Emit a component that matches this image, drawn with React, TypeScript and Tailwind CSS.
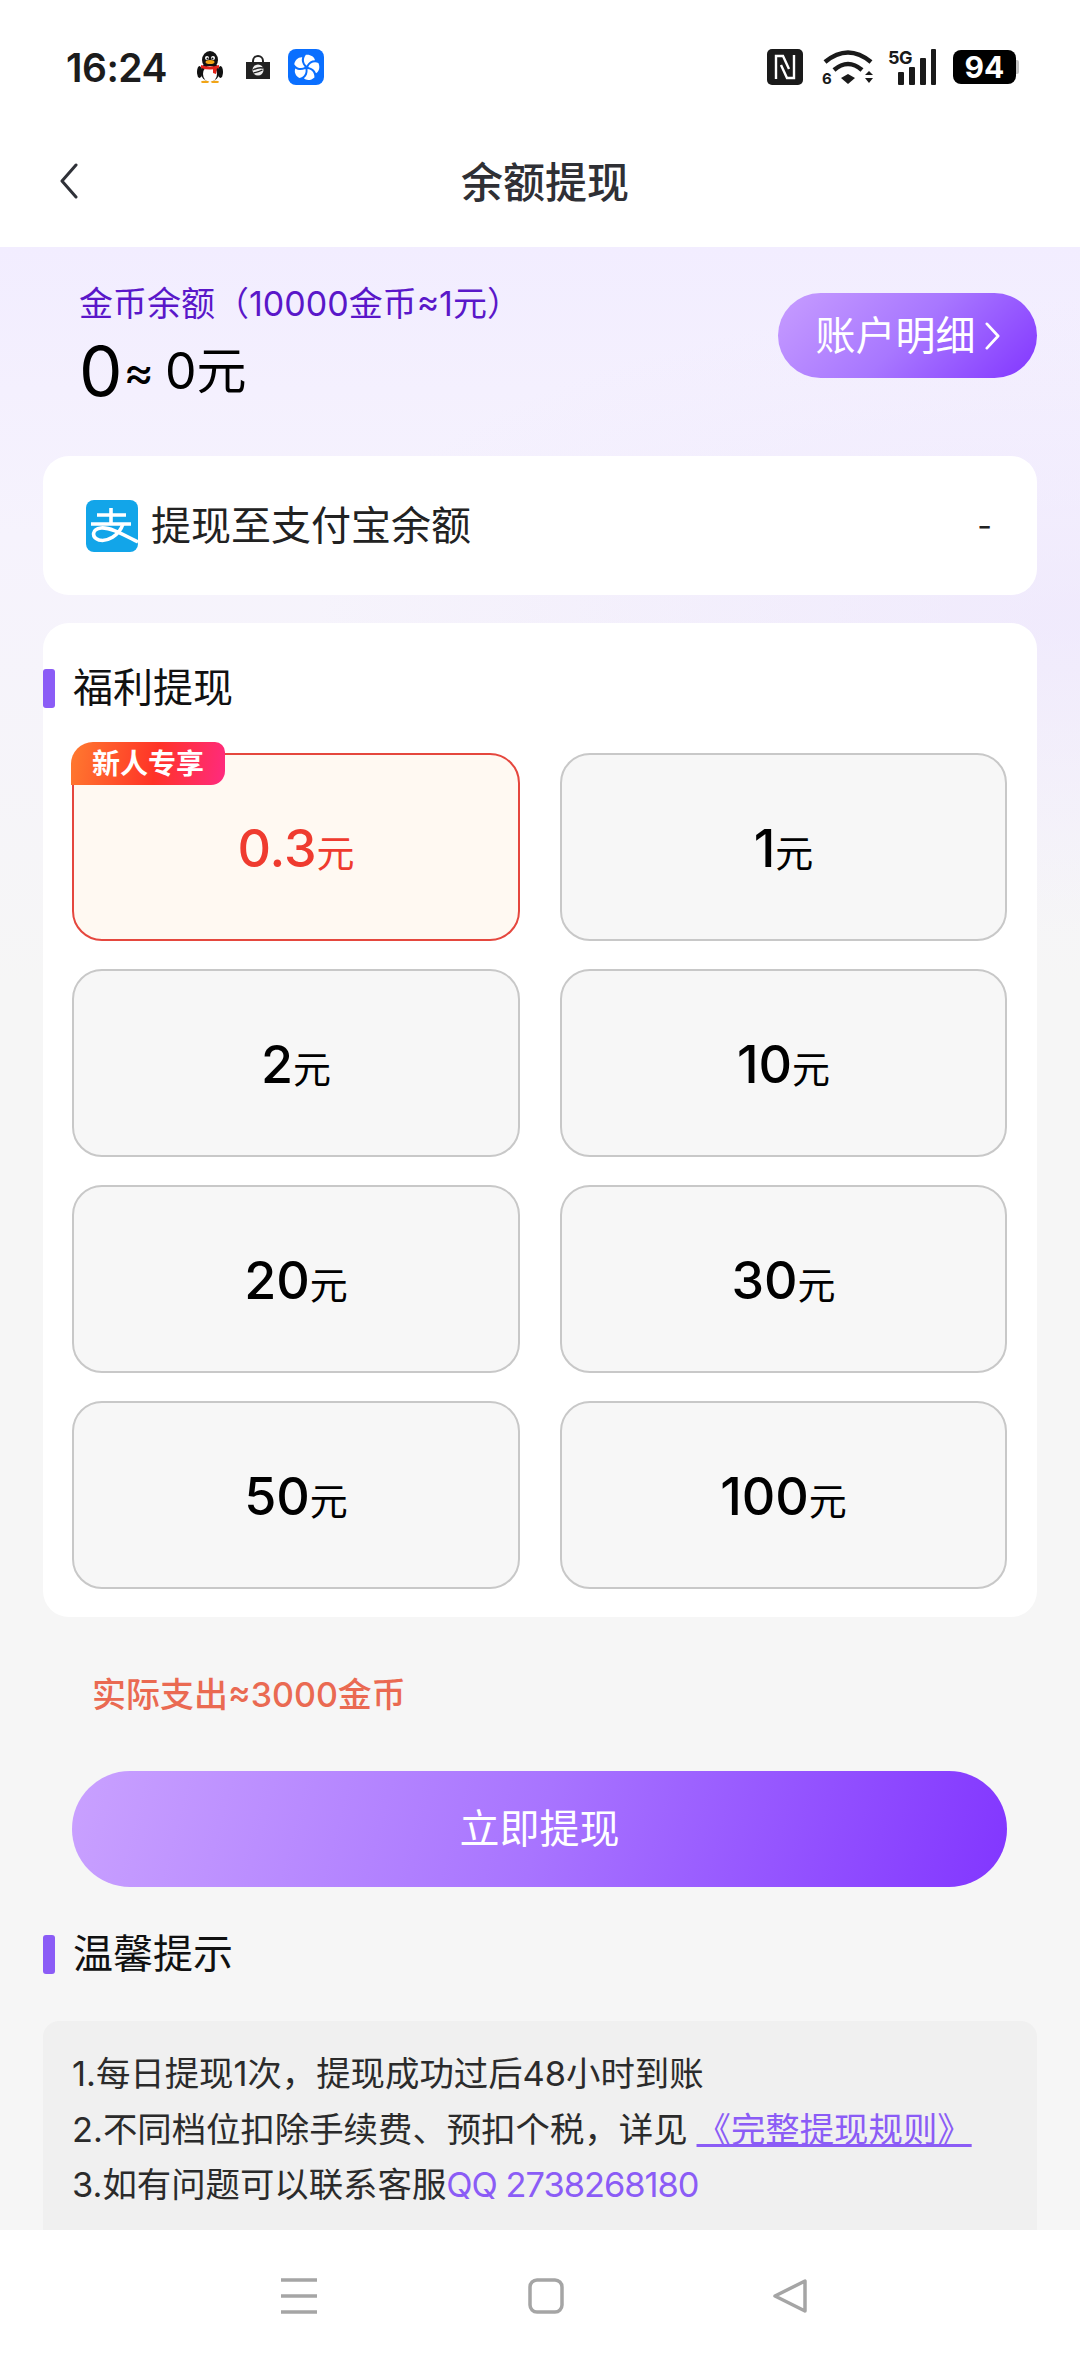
const tiers = ["0.3", "1", "2", "10", "20", "30", "50", "100"];

function SectionTitle({ title }: { title: string }) {
  return (
    <div className="flex items-center gap-[18px]">
      <span className="h-[39px] w-[12px] rounded-[3px] bg-[#8b5cf6]" />
      <span className="text-[40px] leading-[48px] text-[#111]">{title}</span>
    </div>
  );
}

function AlipayLogo() {
  return (
    <svg viewBox="0 0 52 52" className="h-[52px] w-[52px] shrink-0">
      <rect width="52" height="52" rx="8" fill="#12a5e9" />
      <g fill="none" stroke="#fff" strokeWidth="3.600">
        <path d="M11 15H40M25 8V24M5 24H45" />
        <path d="M37 24C33 36 21 42 13 40C5 37 6 29 15 28C24 27 36 34 52 42" />
      </g>
    </svg>
  );
}

function StatusBar() {
  return (
    <div className="flex h-[134px] items-start justify-between pl-[66px] pr-[61px] pt-[49px]">
      <div className="flex h-[36px] items-center">
        <span className="text-[39px] font-semibold leading-none tracking-[-0.5px] text-[#1c1c1c]">16:24</span>
        <svg viewBox="0 0 28 32" className="ml-[29px] h-[32px] w-[28px]">
          <ellipse cx="14" cy="9" rx="8" ry="9" fill="#111" />
          <ellipse cx="14" cy="21" rx="9.500" ry="9.500" fill="#111" />
          <ellipse cx="14" cy="23" rx="7" ry="8" fill="#fff" />
          <ellipse cx="3.500" cy="21" rx="2.500" ry="6" fill="#111" />
          <ellipse cx="24.500" cy="21" rx="2.500" ry="6" fill="#111" />
          <circle cx="11" cy="7" r="2" fill="#fff" />
          <circle cx="17" cy="7" r="2" fill="#fff" />
          <circle cx="11.500" cy="7.500" r="1" fill="#111" />
          <circle cx="16.500" cy="7.500" r="1" fill="#111" />
          <ellipse cx="14" cy="11" rx="4.500" ry="2" fill="#f2a516" />
          <path d="M5 14 Q14 17 23 14 L23 17 Q14 20 5 17Z" fill="#e2231a" />
          <path d="M17 17 L21 17 L20 23 L17 22Z" fill="#e2231a" />
          <ellipse cx="9" cy="31" rx="4" ry="1.200" fill="#f2a516" />
          <ellipse cx="19" cy="31" rx="4" ry="1.200" fill="#f2a516" />
        </svg>
        <svg viewBox="0 0 26 24" className="ml-[21px] h-[24px] w-[26px]">
          <path d="M8 8V6a5 5 0 0 1 10 0v2" fill="none" stroke="#222" strokeWidth="2" />
          <path d="M1 7h24v17H1z" fill="#222" />
          <circle cx="13" cy="15" r="5.500" fill="#eee" />
          <path d="M8 15q5-3 10-2M8.500 18q5-1 9-3" stroke="#222" strokeWidth="1.300" fill="none" />
        </svg>
        <span className="ml-[17px] flex h-[36px] w-[36px] items-center justify-center rounded-[8px] bg-[#0a6fff]">
          <svg viewBox="0 0 24 24" className="h-[29px] w-[29px]" fill="#fff">
            {[0, 72, 144, 216, 288].map((angle) => (
              <path key={angle} d="M12 10.500C9.500 8.500 9 4.500 11.500 1.500C15 1 18.500 3 19 6C16 6 14 7.500 12 10.500Z" transform={`rotate(${angle} 12 12)`} />
            ))}
          </svg>
        </span>
      </div>

      <div className="flex h-[36px] items-center">
        <svg viewBox="0 0 36 36" className="h-[36px] w-[36px]">
          <rect width="36" height="36" rx="5" fill="#1a1a1a" />
          <path d="M9 30V7H16L22 20M27 6V29H20L14 16" fill="none" stroke="#fff" strokeWidth="2.400" />
        </svg>
        <div className="relative ml-[19px] h-[37px] w-[52px]">
          <svg viewBox="0 0 52 37" className="h-[37px] w-[52px]">
            <path d="M3 13Q26-6 49 13" fill="none" stroke="#1a1a1a" strokeWidth="4.500" />
            <path d="M12 21Q26 9 40 21" fill="none" stroke="#1a1a1a" strokeWidth="4.500" />
            <path d="M19 29L26 25L33 29L26 35Z" fill="#1a1a1a" />
            <path d="M43 26l4-4 4 4ZM43 29h8l-4 5Z" fill="#1a1a1a" />
          </svg>
          <span className="absolute bottom-0 left-0 text-[15px] font-bold leading-[15px] text-[#1a1a1a]">6</span>
        </div>
        <div className="relative ml-[14px] flex h-[36px] w-[48px] items-end justify-end gap-[5px]">
          <span className="absolute left-0 top-0 text-[18px] font-bold leading-[18px] tracking-[-0.5px] text-[#1a1a1a]">5G</span>
          <span className="h-[13px] w-[6px] rounded-[1px] bg-[#1a1a1a]" />
          <span className="h-[18px] w-[6px] rounded-[1px] bg-[#1a1a1a]" />
          <span className="h-[27px] w-[6px] rounded-[1px] bg-[#1a1a1a]" />
          <span className="h-[36px] w-[5px] rounded-[1px] bg-[#1a1a1a]" />
        </div>
        <div className="ml-[17px] flex items-center">
          <span className="flex h-[34px] w-[63px] items-center justify-center rounded-[8px] bg-black text-[30px] font-bold leading-none text-white">
            94
          </span>
          <span className="h-[14px] w-[3px] rounded-r-[2px] bg-[#c4c4c4]" />
        </div>
      </div>
    </div>
  );
}

export default function App() {
  return (
    <div className="flex h-[2362px] w-[1080px] flex-col overflow-hidden bg-white font-['Inter','Noto_Sans_CJK_SC',sans-serif]">
      <StatusBar />

      <header className="relative flex h-[113px] items-start justify-center pl-[10px] pt-[24px]">
        <svg viewBox="0 0 18 36" className="absolute left-[60px] top-[29px] h-[36px] w-[18px]">
          <path d="M16 2L2 18L16 34" fill="none" stroke="#2f3138" strokeWidth="3" strokeLinecap="round" strokeLinejoin="round" />
        </svg>
        <h1 className="text-[42px] font-medium leading-[50px] text-[#2f3035]">余额提现</h1>
      </header>

      <main className="min-h-0 flex-1 overflow-hidden bg-[#f6f6f6] bg-[radial-gradient(ellipse_at_100%_45%,rgba(236,228,253,0.6)_0%,rgba(236,228,253,0)_50%),linear-gradient(180deg,#f2edff_0%,#f6f3fd_35%,#f6f6f6_90%)] bg-[length:100%_820px] bg-no-repeat">
        <section className="flex items-start justify-between pl-[79px] pr-[43px] pt-[34px]">
          <div>
            <p className="text-[34px] leading-[46px] text-[#5a17c9]">金币余额（10000金币≈1元）</p>
            <p className="mt-[8px] flex h-[72px] items-center leading-none text-black">
              <span className="text-[69px]">0</span>
              <span className="ml-[1px] text-[46px]">≈</span>
              <span className="ml-[11px] text-[50px]">0元</span>
            </p>
          </div>
          <button className="mt-[12px] flex h-[85px] w-[259px] items-center justify-center gap-[9px] rounded-full bg-[linear-gradient(135deg,#c79dff_0%,#a877ff_50%,#8236ff_100%)] text-[40px] text-white">
            账户明细
            <svg viewBox="0 0 16 30" className="h-[28px] w-[15px]">
              <path d="M2 2L14 15L2 28" fill="none" stroke="#fff" strokeWidth="3" strokeLinecap="round" strokeLinejoin="round" />
            </svg>
          </button>
        </section>

        <div className="mx-[43px] mt-[49px] flex h-[139px] items-center rounded-[26px] bg-white pl-[43px] pr-[45px]">
          <AlipayLogo />
          <span className="ml-[13px] text-[40px] leading-[48px] text-[#222]">提现至支付宝余额</span>
          <span className="ml-auto text-[32px] text-[#222]">-</span>
        </div>

        <div className="mx-[43px] mt-[28px] h-[994px] rounded-[26px] bg-white pt-[41px]">
          <SectionTitle title="福利提现" />
          <div className="mt-[41px] grid grid-cols-[448px_447px] gap-x-[40px] gap-y-[28px] px-[29px]">
            {tiers.map((amount, index) => (
              <div
                key={amount}
                className={
                  index === 0
                    ? "relative flex h-[188px] items-center justify-center rounded-[30px] border-2 border-[#e5473e] bg-[#fff9f2] pt-[4px] text-[#ef3b2f]"
                    : "relative flex h-[188px] items-center justify-center rounded-[30px] border-2 border-[#c8c8c8] bg-[#f7f7f7] pt-[4px] text-black"
                }
              >
                {index === 0 && (
                  <span className="absolute left-[-3px] top-[-13px] flex h-[43px] w-[154px] items-center justify-center rounded-br-[14px] rounded-tl-[22px] rounded-tr-[10px] bg-[linear-gradient(100deg,#ff7a2f_0%,#ff3327_55%,#ff2a80_100%)] text-[28px] font-bold leading-none text-white">
                    新人专享
                  </span>
                )}
                <span className="flex items-baseline leading-none">
                  <span className="text-[52px] font-medium">{amount}</span>
                  <span className="text-[38px]">元</span>
                </span>
              </div>
            ))}
          </div>
        </div>

        <p className="mt-[58px] pl-[92px] text-[34px] font-medium leading-[40px] text-[#ea6a52]">实际支出≈3000金币</p>

        <button className="mx-[72px] mt-[56px] flex h-[116px] w-[935px] items-center justify-center rounded-full bg-[linear-gradient(105deg,#c9a1ff_0%,#a874ff_50%,#8236ff_100%)] text-[40px] text-white">
          立即提现
        </button>

        <div className="ml-[43px] mt-[43px]">
          <SectionTitle title="温馨提示" />
        </div>

        <div className="mx-[43px] mt-[43px] h-[240px] rounded-[16px] bg-[#f0f0f0] px-[29px] pt-[25px] text-[34.400px] leading-[55.500px] text-[#2b2b2b]">
          <p>1.每日提现1次，提现成功过后48小时到账</p>
          <p>
            2.不同档位扣除手续费、预扣个税，详见
            <a className="ml-[9px] text-[#8b5cf6] underline decoration-[3px]">《完整提现规则》</a>
          </p>
          <p>
            3.如有问题可以联系客服<span className="tracking-[-1px] text-[#8b5cf6]">QQ 2738268180</span>
          </p>
        </div>
      </main>

      <nav className="flex h-[132px] shrink-0 items-start justify-start bg-white pl-[281px] pt-[48px]">
        <svg viewBox="0 0 36 36" className="h-[36px] w-[36px] text-[#a5a5a5]">
          <path d="M0 2h36M0 18h36M0 34h36" stroke="currentColor" strokeWidth="3.500" fill="none" />
        </svg>
        <svg viewBox="0 0 36 36" className="ml-[211px] h-[36px] w-[36px] text-[#a5a5a5]">
          <rect x="2" y="2" width="32" height="32" rx="7" stroke="currentColor" strokeWidth="3.500" fill="none" />
        </svg>
        <svg viewBox="0 0 36 36" className="ml-[208px] h-[36px] w-[36px] text-[#a5a5a5]">
          <path d="M33 3V33L3 18Z" stroke="currentColor" strokeWidth="3.500" strokeLinejoin="round" fill="none" />
        </svg>
      </nav>
    </div>
  );
}
